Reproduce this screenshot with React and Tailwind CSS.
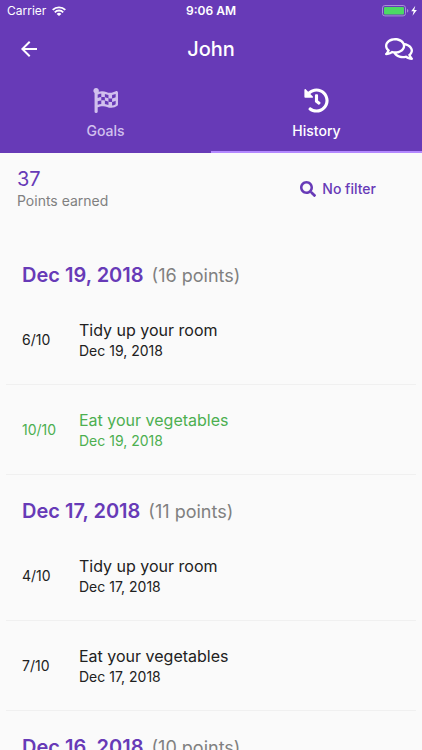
import React from 'react';
import { FaFlagCheckered, FaHistory, FaRegComments, FaSearch } from 'react-icons/fa';
import { MdArrowBack } from 'react-icons/md';

const days = [
  {
    date: 'Dec 19, 2018',
    points: 16,
    entries: [
      { score: '6/10', title: 'Tidy up your room' },
      { score: '10/10', title: 'Eat your vegetables', done: true },
    ],
  },
  {
    date: 'Dec 17, 2018',
    points: 11,
    entries: [
      { score: '4/10', title: 'Tidy up your room' },
      { score: '7/10', title: 'Eat your vegetables' },
    ],
  },
  { date: 'Dec 16, 2018', points: 10, entries: [] },
];

function WifiIcon() {
  return (
    <svg viewBox="0 0 14 10" className="h-[10px] w-[14px]" fill="none" stroke="currentColor" strokeWidth="1.9">
      <path d="M0.7 3.9a9 9 0 0 1 12.6 0" />
      <path d="M2.8 6.3a5.9 5.9 0 0 1 8.4 0" />
      <path d="M4.6 7.9a3.4 3.4 0 0 1 4.8 0L7 10z" fill="currentColor" stroke="none" />
    </svg>
  );
}

function BatteryIcon() {
  return (
    <svg viewBox="0 0 36 12" className="h-3 w-9" fill="none">
      <rect x="0.5" y="0.5" width="23" height="10.4" rx="2.4" stroke="#a88fd6" />
      <rect x="2" y="2" width="20" height="7.4" rx="1" fill="#4cd964" />
      <path d="M25 4v3.6c0.9-0.3 1.3-1 1.3-1.8S25.9 4.3 25 4z" fill="#a88fd6" />
      <path d="M33.3 0.8 29.2 6.3h2.5l-1.2 4.4 4.4-5.7h-2.7z" fill="#fff" />
    </svg>
  );
}

function StatusBar() {
  return (
    <div className="grid h-[22px] grid-cols-3 items-center px-1 text-xs">
      <div className="flex items-center gap-[6px] pl-[3px]">
        <span>Carrier</span>
        <WifiIcon />
      </div>
      <span className="text-center font-semibold">9:06 AM</span>
      <div className="flex justify-end">
        <BatteryIcon />
      </div>
    </div>
  );
}

function Tab({ icon, label, active }) {
  return (
    <button
      type="button"
      role="tab"
      aria-selected={!!active}
      className={
        active
          ? 'flex flex-1 flex-col items-center border-b-2 border-[#b388ff] pt-3 text-white'
          : 'flex flex-1 flex-col items-center border-b-2 border-transparent pt-3 text-[#d1c0ee]'
      }
    >
      {icon}
      <span className="mt-2 text-sm font-medium">{label}</span>
    </button>
  );
}

function Entry({ score, title, date, done }) {
  return (
    <li
      className={
        done
          ? 'mx-[6px] flex h-[90px] items-center border-b border-[#f0f0f0] px-4 text-[#4caf50]'
          : 'mx-[6px] flex h-[90px] items-center border-b border-[#f0f0f0] px-4 text-[#212121]'
      }
    >
      <span className="w-[57px] text-sm">{score}</span>
      <div>
        <p className="text-base leading-[22px]">{title}</p>
        <p className="text-sm">{date}</p>
      </div>
    </li>
  );
}

export default function App() {
  return (
    <div className="flex h-screen flex-col bg-[#fafafa] font-['Inter',sans-serif]">
      <header className="shrink-0 bg-[#673ab7] text-white">
        <StatusBar />
        <div className="grid h-[54px] grid-cols-3 items-center px-[9px]">
          <button type="button" aria-label="Back" className="justify-self-start pl-2">
            <MdArrowBack size={24} />
          </button>
          <h1 className="text-center text-xl font-medium">John</h1>
          <button type="button" aria-label="Messages" className="justify-self-end">
            <FaRegComments size={28} />
          </button>
        </div>
        <div role="tablist" className="flex h-[77px]">
          <Tab icon={<FaFlagCheckered size={25} />} label="Goals" />
          <Tab icon={<FaHistory size={25} />} label="History" active />
        </div>
      </header>

      <main className="min-h-0 flex-1 overflow-y-auto [scrollbar-width:none]">
        <div className="flex items-center justify-between pb-[30px] pl-[17px] pr-[46px] pt-3">
          <div>
            <p className="text-xl text-[#673ab7]">37</p>
            <p className="text-sm leading-4 text-[#808080]">Points earned</p>
          </div>
          <button type="button" className="mt-1 flex items-center gap-[6px] text-sm font-medium text-[#673ab7]">
            <FaSearch size={16} />
            No filter
          </button>
        </div>

        {days.map((day) => (
          <section key={day.date}>
            <h2 className="flex items-baseline gap-2 px-[22px] pb-[6px] pt-[22px] text-xl font-semibold text-[#673ab7]">
              {day.date}
              <span className="text-lg font-normal leading-none text-[#808080]">({day.points} points)</span>
            </h2>
            <ul>
              {day.entries.map((entry) => (
                <Entry key={entry.title} date={day.date} {...entry} />
              ))}
            </ul>
          </section>
        ))}
      </main>
    </div>
  );
}
